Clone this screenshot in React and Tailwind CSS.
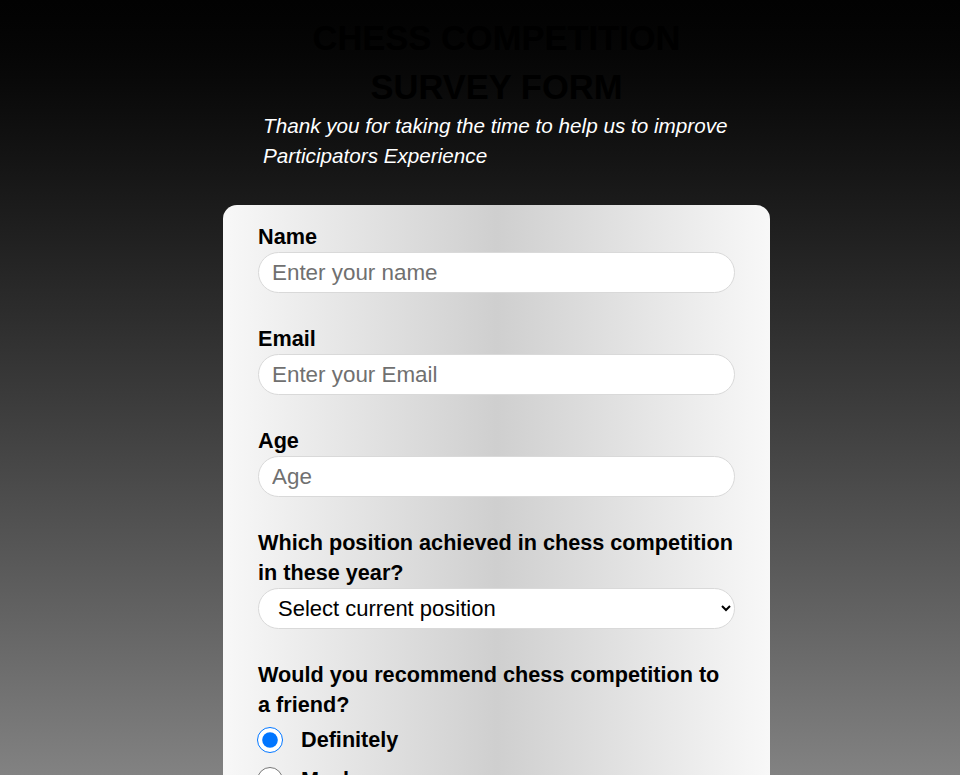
import React from "react";

const font = { fontFamily: '"Liberation Sans", Arial, sans-serif' };

function Field({ label, placeholder, type = "text" }) {
  return (
    <div className="flex flex-col mb-[31px]">
      <label className="text-[21.65px] leading-[30px] font-bold text-black">{label}</label>
      <input
        type={type}
        placeholder={placeholder}
        className="h-[41px] w-full rounded-[21px] border border-[#d9d9d9] bg-white pl-[13px] text-[22.4px] text-black placeholder:text-[#707070] outline-none"
        style={font}
      />
    </div>
  );
}

function Radio({ label, checked }) {
  return (
    <label className="flex items-center h-[40px] gap-[18px]">
      <input
        type="radio"
        name="recommend"
        defaultChecked={checked}
        className="w-[26px] h-[26px] m-0 -ml-[1px]"
      />
      <span className="text-[21.65px] font-bold text-black">{label}</span>
    </label>
  );
}

export default function App() {
  return (
    <div
      className="min-h-screen bg-fixed bg-gradient-to-b from-[#020202] to-[#828282] flex flex-col items-center pl-[33px] pt-[14px] pb-[40px]"
      style={font}
    >
      <h1 className="w-[480px] text-center text-[34.5px] leading-[49px] font-bold text-black m-0">
        CHESS COMPETITION SURVEY FORM
      </h1>
      <p className="w-[547px] pl-[40px] pr-[37px] -mt-[1px] text-[20.7px] leading-[30px] italic text-white">
        Thank you for taking the time to help us to improve Participators Experience
      </p>
      <form className="mt-[34px] w-[547px] rounded-[14px] bg-gradient-to-r from-[#f8f8f8] via-[#cfcfcf] to-[#f8f8f8] px-[35px] pt-[17px] pb-[40px]">
        <Field label="Name" placeholder="Enter your name" />
        <Field label="Email" placeholder="Enter your Email" type="email" />
        <Field label="Age" placeholder="Age" type="number" />
        <div className="flex flex-col mb-[31px]">
          <label className="text-[21.65px] leading-[30px] font-bold text-black">
            Which position achieved in chess competition in these year?
          </label>
          <select
            className="h-[41px] w-full rounded-[21px] border border-[#d9d9d9] bg-white pl-[15px] pr-[4px] text-[22px] text-black outline-none"
            style={font}
            defaultValue=""
          >
            <option value="" disabled>
              Select current position
            </option>
            <option>1st</option>
            <option>2nd</option>
            <option>3rd</option>
          </select>
        </div>
        <div className="flex flex-col">
          <label className="text-[21.65px] leading-[30px] font-bold text-black">
            Would you recommend chess competition to a friend?
          </label>
          <Radio label="Definitely" checked />
          <Radio label="Maybe" />
          <Radio label="Not sure" />
        </div>
      </form>
    </div>
  );
}
